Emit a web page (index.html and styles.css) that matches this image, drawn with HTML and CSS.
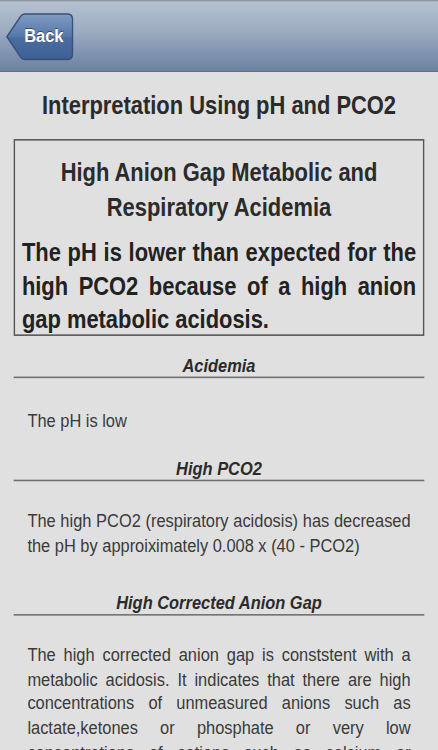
FILE: index.html
```html
<!DOCTYPE html>
<html>
<head>
<meta charset="utf-8">
<link rel="stylesheet" href="styles.css">
</head>
<body>
<div class="screen">
  <header class="navbar">
    <a class="back">
      <svg class="back-shape" viewBox="0 0 50 31" width="50" height="31">
        <defs>
          <linearGradient id="bg" x1="0" y1="0" x2="0" y2="1">
            <stop offset="0" stop-color="#7f9cc4"/>
            <stop offset="0.5" stop-color="#5577a8"/>
            <stop offset="0.52" stop-color="#4a6c9f"/>
            <stop offset="1" stop-color="#3e6096"/>
          </linearGradient>
        </defs>
        <path d="M1 15.5 L11 2.5 Q12.2 1 14 1 L45.5 1 Q49 1 49 4.5 L49 26.5 Q49 30 45.5 30 L14 30 Q12.2 30 11 28.5 Z" fill="url(#bg)" stroke="#3a5078" stroke-width="1"/>
      </svg>
      <span class="back-label">Back</span>
    </a>
  </header>
  <main class="content">
    <h1 class="title">Interpretation Using pH and PCO2</h1>
    <div class="summary">
      <h2 class="summary-head">High Anion Gap Metabolic and Respiratory Acidemia</h2>
      <p class="summary-body">The pH is lower than expected for the high PCO2 because of a high anion gap metabolic acidosis.</p>
    </div>
    <section class="sec sec-first">
      <h3 class="sec-head">Acidemia</h3>
      <p class="sec-text">The pH is low</p>
    </section>
    <section class="sec">
      <h3 class="sec-head">High PCO2</h3>
      <p class="sec-text">The high PCO2 (respiratory acidosis) has decreased the pH by approiximately 0.008 x (40 - PCO2)</p>
    </section>
    <section class="sec sec-gap">
      <h3 class="sec-head">High Corrected Anion Gap</h3>
      <p class="sec-text">The high corrected anion gap is conststent with a metabolic acidosis. It indicates that there are high concentrations of unmeasured anions such as lactate,ketones or phosphate or very low concentrations of cations such as calcium or magnesium.</p>
    </section>
  </main>
</div>
</body>
</html>
```

FILE: styles.css
```css
html, body {
  margin: 0;
  padding: 0;
  width: 438px;
  height: 750px;
  overflow: hidden;
  background: #e0e0e0;
}

.screen {
  width: 320px;
  height: 480px;
  overflow: hidden;
  transform: scale(1.36875, 1.5625);
  transform-origin: 0 0;
  background: #e0e0e0;
  font-family: "Liberation Sans", Arial, sans-serif;
  color: #2b2b2b;
}

.navbar {
  height: 44px;
  border-top: 1px solid #8c96a4;
  border-bottom: 1px solid #525f74;
  background: linear-gradient(to bottom, #b6c2d2 0%, #9aaac0 45%, #7c91ae 80%, #6c83a3 100%);
  display: flex;
  align-items: center;
  padding-left: 4px;
  box-sizing: content-box;
}

.back {
  position: relative;
  width: 50px;
  height: 31px;
  display: flex;
  align-items: center;
  justify-content: center;
}

.back-shape {
  position: absolute;
  left: 0;
  top: 0;
}

.back-label {
  position: relative;
  margin-left: 6px;
  color: #fff;
  font-weight: bold;
  font-size: 12px;
  text-shadow: 0 -1px 0 rgba(0,0,0,0.45);
}

.content {
  padding: 12px 10px 0 10px;
}

.title {
  margin: 0;
  text-align: center;
  font-size: 16px;
  line-height: 20px;
  font-weight: bold;
}

.summary {
  margin-top: 11px;
  border: 1px solid #555;
  padding: 10px 5px 0 5px;
  height: 126px;
  box-sizing: border-box;
}

.summary-head {
  margin: 0;
  text-align: center;
  font-size: 16px;
  line-height: 22px;
  font-weight: bold;
}

.summary-body {
  margin: 7px 0 0 0;
  font-size: 16px;
  line-height: 21.5px;
  font-weight: bold;
  text-align: justify;
  color: #222;
}

.sec-head {
  margin: 16.5px 0 0 0;
  text-align: center;
  font-size: 12px;
  line-height: 13px;
  font-weight: bold;
  font-style: italic;
  border-bottom: 1px solid #6e6e6e;
}

.sec-first .sec-head {
  margin-top: 13px;
}

.sec-first .sec-text {
  margin-top: 19.5px;
}

.sec-gap .sec-head {
  margin-top: 22.5px;
}

.sec-text {
  margin: 18px 10px 0 10px;
  font-size: 12px;
  line-height: 15.8px;
  text-align: justify;
  color: #3a3a3a;
}
```
